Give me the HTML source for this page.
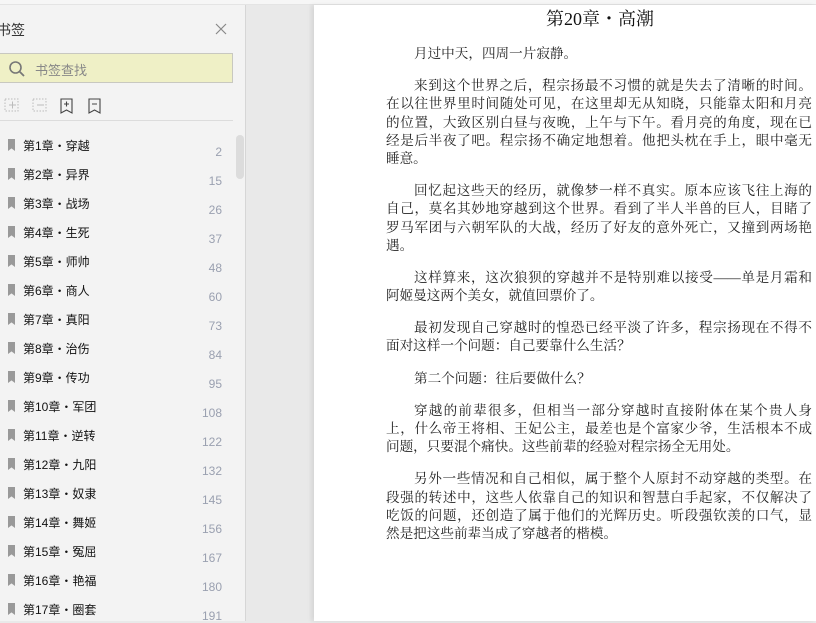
<!DOCTYPE html>
<html><head><meta charset="utf-8"><style>
*{margin:0;padding:0;box-sizing:border-box}
body{width:816px;height:621px;overflow:hidden;background:#e9e9e9;position:relative;font-family:"Liberation Sans","Noto Sans CJK SC",sans-serif}
.top{position:absolute;left:0;top:0;width:816px;height:5px;background:#f6f6f6;border-bottom:1px solid #e4e4e4}
.side{position:absolute;left:0;top:5px;width:246px;height:616px;background:#f3f3f3;border-right:1px solid #d6d6d6}
.ttl{position:absolute;left:-3px;top:15px;font-size:14px;color:#333}
.search{position:absolute;left:-2px;top:48px;width:235px;height:30px;background:#eff0c6;border:1px solid #c8c8c0}
.search span{position:absolute;left:36px;top:6px;font-size:13px;color:#888}
.sep{position:absolute;left:0;top:115px;width:233px;height:1px;background:#dcdcdc}
.item{position:absolute;left:8px;font-size:12px;color:#111;height:20px}
.item i{display:inline-block;width:7px;height:12px;background:#999;margin-right:8px;vertical-align:-1px;clip-path:polygon(0 0,100% 0,100% 100%,50% 78%,0 100%)}
.num{position:absolute;right:24px;font-size:12px;color:#9aa0b0}
.sb{position:absolute;left:236px;top:130px;width:8px;height:44px;background:#dcdcdc;border-radius:4px}
.page{position:absolute;left:314px;top:5px;width:502px;height:616px;background:#fff;box-shadow:-3px 0 4px rgba(0,0,0,.08)}
.h{position:absolute;left:0;width:572px;text-align:center;top:0px;font-size:18px;color:#111;font-family:"Liberation Serif","Noto Serif CJK SC",serif}
.txt{position:absolute;left:72px;width:426px;font-family:"Liberation Serif","Noto Serif CJK SC",serif;font-size:13.6px;color:#222;line-height:18.2px}
.l{text-align:justify;text-align-last:justify;white-space:nowrap;height:18.2px}
.f{padding-left:28px}
.e{text-align-last:left}
.p{margin-bottom:14px}
</style></head><body>
<div class="top"></div>
<div class="side">
<div class="ttl">书签</div>
<svg style="position:absolute;left:215px;top:18px" width="12" height="12" viewBox="0 0 12 12"><path d="M1 1L11 11M11 1L1 11" stroke="#888" stroke-width="1.2"/></svg>
<div class="search"><svg style="position:absolute;left:9px;top:6px" width="18" height="18" viewBox="0 0 18 18"><circle cx="7.5" cy="7.5" r="5.5" fill="none" stroke="#777" stroke-width="1.6"/><path d="M11.5 11.5L16 16" stroke="#777" stroke-width="1.8"/></svg><span>书签查找</span></div>
<svg style="position:absolute;left:3px;top:92px" width="110" height="18" viewBox="0 0 110 18">
<g stroke="#bbb" fill="none" stroke-dasharray="1.5 1.5"><rect x="2" y="2" width="13" height="12"/><rect x="30" y="2" width="13" height="12"/></g>
<path d="M6 8h7M9.5 4.5v7M34 8h7" stroke="#bbb"/>
<path d="M58 2h11v14l-5.5-3-5.5 3z M61 7h5M63.5 4.5v5" stroke="#444" fill="none" stroke-width="1.1"/>
<path d="M86 2h11v14l-5.5-3-5.5 3z M89 7h5" stroke="#444" fill="none" stroke-width="1.1"/>
</svg>
<div class="sep"></div>
<div class="sb"></div>
</div>
<div id="items"></div>
<div class="page">
<div class="h">第20章・高潮</div>
<div class="txt" style="top:40px">
<div class="p"><div class="l f e">月过中天，四周一片寂静。</div></div>
<div class="p"><div class="l f">来到这个世界之后，程宗扬最不习惯的就是失去了清晰的时间。</div><div class="l">在以往世界里时间随处可见，在这里却无从知晓，只能靠太阳和月亮</div><div class="l">的位置，大致区别白昼与夜晚，上午与下午。看月亮的角度，现在已</div><div class="l">经是后半夜了吧。程宗扬不确定地想着。他把头枕在手上，眼中毫无</div><div class="l e">睡意。</div></div>
<div class="p"><div class="l f">回忆起这些天的经历，就像梦一样不真实。原本应该飞往上海的</div><div class="l">自己，莫名其妙地穿越到这个世界。看到了半人半兽的巨人，目睹了</div><div class="l">罗马军团与六朝军队的大战，经历了好友的意外死亡，又撞到两场艳</div><div class="l e">遇。</div></div>
<div class="p"><div class="l f">这样算来，这次狼狈的穿越并不是特别难以接受——单是月霜和</div><div class="l e">阿姬曼这两个美女，就值回票价了。</div></div>
<div class="p"><div class="l f">最初发现自己穿越时的惶恐已经平淡了许多，程宗扬现在不得不</div><div class="l e">面对这样一个问题：自己要靠什么生活？</div></div>
<div class="p"><div class="l f e">第二个问题：往后要做什么？</div></div>
<div class="p"><div class="l f">穿越的前辈很多，但相当一部分穿越时直接附体在某个贵人身</div><div class="l">上，什么帝王将相、王妃公主，最差也是个富家少爷，生活根本不成</div><div class="l e">问题，只要混个痛快。这些前辈的经验对程宗扬全无用处。</div></div>
<div class="p"><div class="l f">另外一些情况和自己相似，属于整个人原封不动穿越的类型。在</div><div class="l">段强的转述中，这些人依靠自己的知识和智慧白手起家，不仅解决了</div><div class="l">吃饭的问题，还创造了属于他们的光辉历史。听段强钦羡的口气，显</div><div class="l e">然是把这些前辈当成了穿越者的楷模。</div></div>
</div>
</div>
<script>
var n=["穿越","异界","战场","生死","师帅","商人","真阳","治伤","传功","军团","逆转","九阳","奴隶","舞姬","冤屈","艳福","圈套"];
var p=[2,15,26,37,48,60,73,84,95,108,122,132,145,156,167,180,191];
var h="";
for(var i=0;i<17;i++){var y=137+i*29;
h+='<div class="item" style="top:'+y+'px"><i></i>第'+(i+1)+'章・'+n[i]+'</div><div class="num" style="left:0;width:222px;text-align:right;top:'+(y+8)+'px">'+p[i]+'</div>';}
document.getElementById("items").innerHTML=h;
</script>
</body></html>
